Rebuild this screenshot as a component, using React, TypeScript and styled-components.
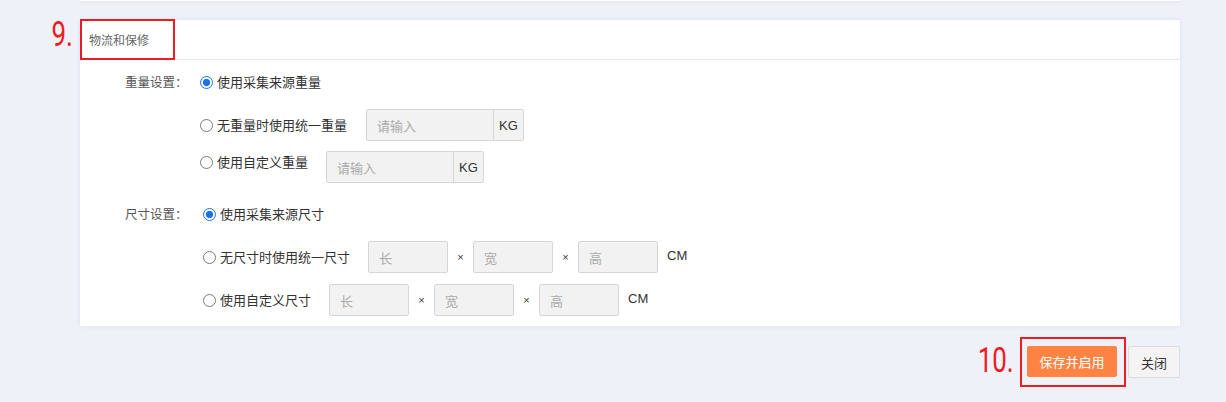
import React from "react";
import styled, { createGlobalStyle, css } from "styled-components";

const Global = createGlobalStyle`
  html, body { margin: 0; padding: 0; background: #eef1f8; }
  body { font-family: "Noto Sans CJK SC", "Liberation Sans", sans-serif; }
  * { box-sizing: border-box; }
`;

const Page = styled.div`
  width: 1226px;
  height: 402px;
  padding: 0 46px 0 80px;
  background: #eef1f8;
  display: flex;
  flex-direction: column;
  overflow: hidden;
`;

const PrevCard = styled.div`
  height: 1px;
  background: #fff;
  box-shadow: 0 1px 3px rgba(60, 70, 110, 0.12);
`;

const Card = styled.section`
  position: relative;
  margin-top: 19px;
  background: #fff;
  box-shadow: 0 0 4px rgba(60, 70, 110, 0.1);
`;

const Header = styled.div`
  height: 40px;
  border-bottom: 1px solid #e6e6e6;
  padding-left: 9px;
  display: flex;
  align-items: center;
  font-size: 12px;
  color: #666;
`;

const AnnotBox = styled.div`
  position: absolute;
  border: 2px solid #ec1c24;
`;

const HeaderBox = styled(AnnotBox)`
  left: 0;
  top: -1px;
  width: 95px;
  height: 41px;
`;

const AnnotNum = styled.span`
  position: absolute;
  right: calc(100% + 8px);
  font-family: Roboto, "Liberation Sans", sans-serif;
  font-weight: 400;
  font-size: 35px;
  line-height: 1;
  color: #ec1c24;
  white-space: nowrap;
  transform: scaleX(0.74);
  transform-origin: right center;
`;

const Body = styled.div`
  padding: 12px 0 10px 45px;
  display: flex;
  flex-direction: column;
`;

const Group = styled.div<{ $mt?: number; $shift?: number }>`
  display: grid;
  grid-template-columns: 75px 1fr;
  margin-top: ${(p) => p.$mt ?? 0}px;
  & > div:last-child { margin-left: ${(p) => p.$shift ?? 0}px; }
`;

const Label = styled.div`
  font-size: 12.5px;
  color: #555;
  line-height: 20px;
  height: 20px;
  white-space: nowrap;
`;

const Options = styled.div`
  display: flex;
  flex-direction: column;
`;

const Row = styled.div<{ $h: number; $mt?: number; $top?: boolean }>`
  display: flex;
  align-items: ${(p) => (p.$top ? "flex-start" : "center")};
  height: ${(p) => p.$h}px;
  margin-top: ${(p) => p.$mt ?? 0}px;
`;

const Option = styled.label<{ $w?: number; $lh?: number }>`
  display: inline-flex;
  align-items: center;
  gap: 4px;
  font-size: 13px;
  color: #333;
  white-space: nowrap;
  line-height: ${(p) => p.$lh ?? 20}px;
  ${(p) => p.$w && css`width: ${p.$w}px;`}
`;

const Radio = styled.span<{ $on?: boolean }>`
  width: 13px;
  height: 13px;
  border-radius: 50%;
  flex: none;
  ${(p) =>
    p.$on
      ? css`
          border: 1.5px solid #1a73e8;
          background: radial-gradient(circle, #1a73e8 0 3.4px, #fff 3.9px);
        `
      : css`
          border: 1px solid #7a7a7a;
          background: #fff;
        `}
`;

const Field = styled.input<{ $w: number; $addon?: boolean }>`
  width: ${(p) => p.$w}px;
  height: 32px;
  border: 1px solid #d6d6d6;
  background: #f2f2f2;
  border-radius: ${(p) => (p.$addon ? "2px 0 0 2px" : "2px")};
  padding: 0 10px;
  font-family: "Noto Sans CJK SC", "Liberation Sans", sans-serif;
  font-size: 13px;
  color: #333;
  outline: none;
  &::placeholder { color: #aaa; }
`;

const Addon = styled.span`
  width: 30px;
  height: 32px;
  border: 1px solid #d6d6d6;
  border-left: none;
  border-radius: 0 2px 2px 0;
  background: #f2f2f2;
  display: flex;
  align-items: center;
  justify-content: center;
  font-family: "Liberation Sans", sans-serif;
  font-size: 13px;
  color: #333;
`;

const InputGroup = styled.div`
  display: flex;
`;

const Times = styled.span`
  width: 25px;
  text-align: center;
  font-family: "Liberation Sans", sans-serif;
  font-size: 11px;
  color: #3a3a3a;
`;

const Unit = styled.span`
  margin-left: 9px;
  margin-bottom: 3px;
  font-family: "Liberation Sans", sans-serif;
  font-size: 13px;
  color: #333;
`;

const Footer = styled.div`
  display: flex;
  justify-content: flex-end;
  align-items: flex-start;
  gap: 2px;
  margin-top: 11px;
`;

const FooterBox = styled.div`
  position: relative;
  border: 2px solid #ec1c24;
  padding: 7px 7px 8px 5px;
`;

const FooterNum = styled(AnnotNum)`
  top: 4px;
  right: calc(100% + 8px);
`;

const HeaderNum = styled(AnnotNum)`
  top: -4px;
  right: calc(100% + 9px);
`;

const Button = styled.button<{ $primary?: boolean }>`
  height: ${(p) => (p.$primary ? 31 : 32)}px;
  padding: 0;
  width: ${(p) => (p.$primary ? 90 : 52)}px;
  border-radius: 2px;
  font-family: "Noto Sans CJK SC", "Liberation Sans", sans-serif;
  font-size: 13px;
  cursor: pointer;
  ${(p) =>
    p.$primary
      ? css`
          background: #ff8444;
          border: none;
          color: #fff;
        `
      : css`
          margin-top: 9px;
          background: #f4f4f4;
          border: 1px solid #dcdcdc;
          color: #333;
        `}
`;

const DimInputs: React.FC = () => (
  <>
    <Field $w={80} placeholder="长" />
    <Times>×</Times>
    <Field $w={80} placeholder="宽" />
    <Times>×</Times>
    <Field $w={80} placeholder="高" />
    <Unit>CM</Unit>
  </>
);

export default function App() {
  return (
    <Page>
      <Global />
      <PrevCard />
      <Card>
        <Header>物流和保修</Header>
        <HeaderBox>
          <HeaderNum>9.</HeaderNum>
        </HeaderBox>
        <Body>
          <Group>
            <Label>重量设置：</Label>
            <Options>
              <Row $h={20}>
                <Option>
                  <Radio $on />
                  使用采集来源重量
                </Option>
              </Row>
              <Row $h={32} $mt={17}>
                <Option $w={166}>
                  <Radio />
                  无重量时使用统一重量
                </Option>
                <InputGroup>
                  <Field $w={128} $addon placeholder="请输入" />
                  <Addon>KG</Addon>
                </InputGroup>
              </Row>
              <Row $h={32} $mt={10} $top>
                <Option $w={126} $lh={22}>
                  <Radio />
                  使用自定义重量
                </Option>
                <InputGroup>
                  <Field $w={128} $addon placeholder="请输入" />
                  <Addon>KG</Addon>
                </InputGroup>
              </Row>
            </Options>
          </Group>
          <Group $mt={21} $shift={3}>
            <Label>尺寸设置：</Label>
            <Options>
              <Row $h={20}>
                <Option>
                  <Radio $on />
                  使用采集来源尺寸
                </Option>
              </Row>
              <Row $h={32} $mt={17}>
                <Option $w={165}>
                  <Radio />
                  无尺寸时使用统一尺寸
                </Option>
                <DimInputs />
              </Row>
              <Row $h={32} $mt={11}>
                <Option $w={126}>
                  <Radio />
                  使用自定义尺寸
                </Option>
                <DimInputs />
              </Row>
            </Options>
          </Group>
        </Body>
      </Card>
      <Footer>
        <FooterBox>
          <FooterNum>10.</FooterNum>
          <Button $primary>保存并启用</Button>
        </FooterBox>
        <Button>关闭</Button>
      </Footer>
    </Page>
  );
}
